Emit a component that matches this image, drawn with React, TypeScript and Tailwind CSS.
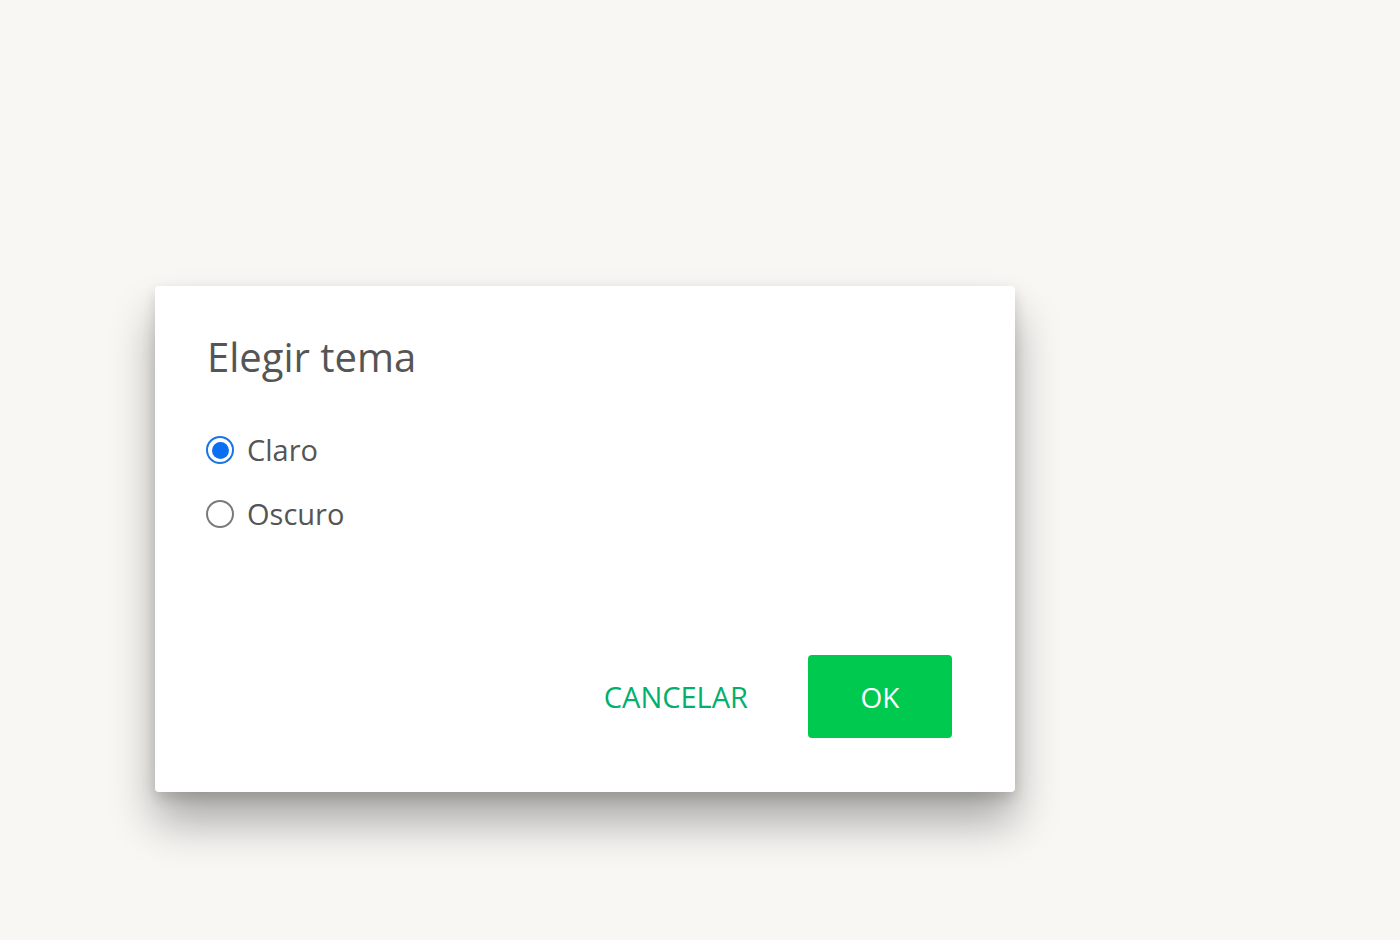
import React from "react";

export default function App() {
  return (
    <div className="w-[1400px] h-[940px] bg-[#f8f7f4] pt-[286px] pl-[155px] overflow-hidden" style={{ fontFamily: '"Open Sans", "Noto Sans", sans-serif' }}>
      <div className="w-[860px] h-[506px] bg-white rounded-[4px] shadow-[0_30px_45px_rgba(0,0,0,0.32),0_6px_14px_rgba(0,0,0,0.14)] flex flex-col pl-[52px] pr-[63px] pt-[43px] pb-[54px]">
        <h1 className="text-[40px] text-[#555555] leading-[56px] font-normal">Elegir tema</h1>
        <div className="flex flex-col gap-[24px] mt-[45px]">
          <label className="flex items-center gap-[13px] h-[40px] -ml-[1px]">
            <span className="w-[28px] h-[28px] rounded-full border-[2px] border-[#1a73e8] bg-white flex items-center justify-center">
              <span className="w-[17px] h-[17px] rounded-full bg-[#0a6ff0]" />
            </span>
            <span className="text-[29px] text-[#555555]">Claro</span>
          </label>
          <label className="flex items-center gap-[13px] h-[40px] -ml-[1px]">
            <span className="w-[28px] h-[28px] rounded-full border-[2px] border-[#7a7a7a] bg-white" />
            <span className="text-[29px] text-[#555555]">Oscuro</span>
          </label>
        </div>
        <div className="flex-1" />
        <div className="flex justify-end items-center gap-[60px]">
          <button className="text-[29px] text-[#00b06c] font-medium">CANCELAR</button>
          <button className="w-[144px] h-[83px] bg-[#00c950] rounded-[4px] text-white text-[28px]">OK</button>
        </div>
      </div>
    </div>
  );
}
